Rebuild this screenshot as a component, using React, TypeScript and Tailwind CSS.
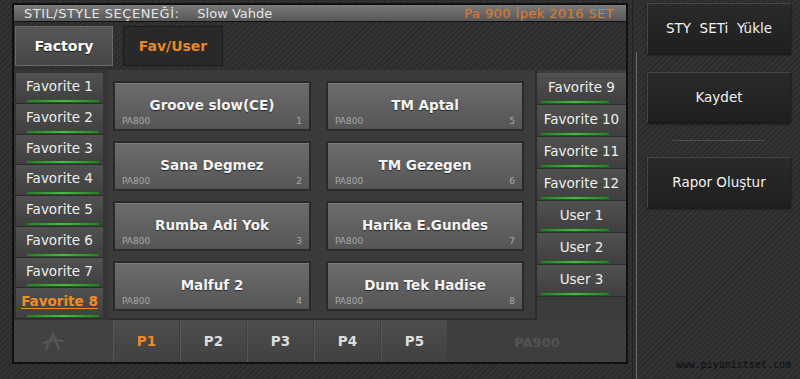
import React from "react";

type Style = { name: string; num: number };

const leftFavs = ["Favorite 1", "Favorite 2", "Favorite 3", "Favorite 4", "Favorite 5", "Favorite 6", "Favorite 7"];
const rightFavs = ["Favorite 9", "Favorite 10", "Favorite 11", "Favorite 12", "User 1", "User 2", "User 3"];

const styles: Style[] = [
  { name: "Groove slow(CE)", num: 1 },
  { name: "TM Aptal", num: 5 },
  { name: "Sana Degmez", num: 2 },
  { name: "TM Gezegen", num: 6 },
  { name: "Rumba Adi Yok", num: 3 },
  { name: "Harika E.Gundes", num: 7 },
  { name: "Malfuf 2", num: 4 },
  { name: "Dum Tek Hadise", num: 8 },
];

const stripes =
  "bg-[repeating-linear-gradient(135deg,#2c2c2c_0px,#2c2c2c_2px,#333333_2px,#333333_4px)]";

function FavItem({ label, active, right }: { label: string; active?: boolean; right?: boolean }) {
  return (
    <div
      className={`flex flex-col border-b border-[#2b2b2b] bg-linear-to-b from-[#515151] to-[#3f3f3f] ${
        right ? "h-[32px]" : "h-[30.75px]"
      }`}
    >
      <div
        className={`flex-1 flex items-center justify-center text-[13.5px] leading-none pt-[1px] ${
          active ? "text-[#f08d27] font-bold underline underline-offset-2" : "text-[#eeeeee]"
        }`}
      >
        {label}
      </div>
      <div
        className={`h-[2px] mb-[1px] bg-linear-to-r from-[#2b7a2b] via-[#3fbf3f] to-[#2b7a2b] shadow-[0_0_2px_#1f6f1f] ${
          right ? "ml-[4px] mr-[17px]" : "ml-[11px] mr-[4px]"
        }`}
      />
    </div>
  );
}

function StyleButton({ s }: { s: Style }) {
  return (
    <div className="h-[50px] border-2 border-[#2a2a2a] bg-linear-to-b from-[#6c6c6c] to-[#555555] flex flex-col shadow-[inset_0_1px_0_#7c7c7c]">
      <div className="pt-[14px] h-[30px] text-center text-[13.5px] leading-[16px] font-bold text-[#f4f4f4] [text-shadow:0_1px_1px_rgba(0,0,0,0.6)]">
        {s.name}
      </div>
      <div className="mt-[3px] px-[7px] flex justify-between text-[9px] leading-[10px] text-[#a8a8a8]">
        <span>PA800</span>
        <span>{s.num}</span>
      </div>
    </div>
  );
}

function SideButton({ label, className = "" }: { label: string; className?: string }) {
  return (
    <div
      className={`h-[51px] flex items-center justify-center border border-[#474747] border-b-[#1a1a1a] border-r-[#1f1f1f] bg-linear-to-b from-[#2a2a2a] to-[#1f1f1f] text-[13.5px] text-[#f2f2f2] whitespace-pre shadow-[0_1px_2px_rgba(0,0,0,0.6)] ${className}`}
    >
      {label}
    </div>
  );
}

export default function App() {
  return (
    <div
      className={`w-[800px] h-[379px] flex overflow-hidden ${stripes}`}
      style={{ fontFamily: '"DejaVu Sans", Verdana, sans-serif' }}
    >
      {/* main panel */}
      <div className="pl-[12px] pt-[3px]">
        <div className="w-[616px] h-[361px] border-2 border-[#101010] flex flex-col">
          <div className="h-[17px] border-b border-[#111] bg-linear-to-b from-[#7a7a7a] to-[#575757] flex items-center justify-between pl-[10px] pr-[12px] text-[13px] leading-none">
            <div className="text-[#e4e4e4]">
              <span className="tracking-[0.5px]">STIL/STYLE SEÇENEĞİ:</span>
              <span className="ml-[18px]">Slow Vahde</span>
            </div>
            <div className="text-[#e27c2a] tracking-[0.4px]">Pa 900 İpek 2016 SET</div>
          </div>

          <div className="h-[48px] pt-[4px] pl-[1px] flex">
            <div className="w-[98px] h-[40px] border border-[#6a6a6a] bg-linear-to-b from-[#575757] to-[#474747] flex items-center justify-center text-[14px] font-bold text-white [text-shadow:0_1px_1px_rgba(0,0,0,0.7)]">
              Factory
            </div>
            <div className="ml-[10px] w-[100px] h-[40px] border border-[#1b1b1b] bg-[#292929] flex items-center justify-center text-[14px] font-bold text-[#e8862a]">
              Fav/User
            </div>
          </div>

          <div className="h-[250px] flex bg-[#393939]">
            <div className="w-[94px] pt-[3px] pl-[2px] bg-[#353535]">
              <div className="w-[87px]">
                {leftFavs.map((f) => (
                  <FavItem key={f} label={f} />
                ))}
                <FavItem label="Favorite 8" active />
              </div>
            </div>
            <div className="w-[429px] pl-[5px] pt-[11px] bg-[#3b3b3b] border-r-2 border-b-2 border-[#2e2e2e]">
              <div className="grid grid-cols-[198px_198px] gap-x-[15px] gap-y-[10px]">
                {styles.map((s) => (
                  <StyleButton key={s.num} s={s} />
                ))}
              </div>
            </div>
            <div className="flex-1 pt-[3px] bg-[#3c3c3c]">
              {rightFavs.map((f) => (
                <FavItem key={f} label={f} right />
              ))}
            </div>
          </div>

          <div className="flex-1 flex bg-[#3e3e3e]">
            <div className="w-[99px] bg-[#424242] flex items-center justify-center pr-[22px]">
              <svg width="24" height="20" viewBox="0 0 24 20" fill="none">
                <path d="M5 18 L12 3 L18 18" stroke="#565656" strokeWidth="2.2" strokeLinecap="round" />
                <path d="M3 12 Q12 8 22 10" stroke="#565656" strokeWidth="2" strokeLinecap="round" />
              </svg>
            </div>
            {["P1", "P2", "P3", "P4", "P5"].map((p, i) => (
              <div
                key={p}
                className={`w-[66px] mr-[1px] flex items-center justify-center bg-linear-to-b from-[#4d4d4d] to-[#414141] border-l border-[#565656] text-[13.5px] font-bold ${
                  i === 0 ? "text-[#f08a25]" : "text-[#dedede]"
                }`}
              >
                {p}
              </div>
            ))}
            <div className="flex-1 flex items-center justify-center pt-[4px] text-[13px] font-bold text-[#535353]">
              PA900
            </div>
          </div>
        </div>
      </div>

      {/* right side */}
      <div className="flex-1 flex">
        <div className="w-[9px] flex">
          <div className="ml-[4px] w-px bg-[#222]" />
          <div className="ml-[3px] mt-[52px] w-px bg-[#6b6b6b]" />
        </div>
        <div className="ml-[10px] w-[144px] pt-[3px] pb-[8px] flex flex-col">
          <SideButton label="STY  SETi  Yükle" />
          <SideButton label="Kaydet" className="mt-[18px]" />
          <div className="mt-[17px] ml-[26px] w-[92px] h-px bg-[#4e4e4e]" />
          <SideButton label="Rapor Oluştur" className="mt-[16px]" />
          <div
            className="mt-auto text-right text-[10px] leading-[12px] text-[#0d0d0d]"
            style={{ fontFamily: '"DejaVu Sans Mono", "Liberation Mono", monospace' }}
          >
            www.piyanistset.com
          </div>
        </div>
      </div>
    </div>
  );
}
